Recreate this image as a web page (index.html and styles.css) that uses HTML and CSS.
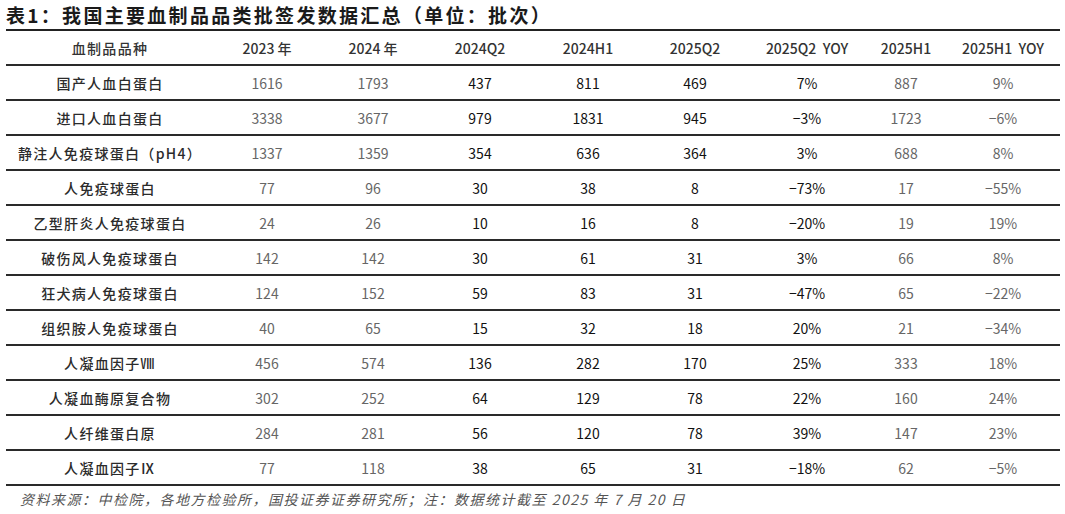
FILE: index.html
```html
<!DOCTYPE html>
<html lang="zh-CN">
<head>
<meta charset="utf-8">
<title>表1</title>
<link rel="stylesheet" href="styles.css">
</head>
<body>
<div class="page">
  <div class="title">表1：我国主要血制品品类批签发数据汇总（单位：批次）</div>
  <div class="table">
    <div class="row head">
      <div class="c name">血制品品种</div>
      <div class="c">2023 年</div>
      <div class="c">2024 年</div>
      <div class="c">2024Q2</div>
      <div class="c">2024H1</div>
      <div class="c">2025Q2</div>
      <div class="c">2025Q2&nbsp; YOY</div>
      <div class="c">2025H1</div>
      <div class="c">2025H1&nbsp; YOY</div>
    </div>
    <div class="row"><div class="c name">国产人血白蛋白</div><div class="c g">1616</div><div class="c g">1793</div><div class="c d">437</div><div class="c d">811</div><div class="c d">469</div><div class="c d">7%</div><div class="c g">887</div><div class="c g">9%</div></div>
    <div class="row"><div class="c name">进口人血白蛋白</div><div class="c g">3338</div><div class="c g">3677</div><div class="c d">979</div><div class="c d">1831</div><div class="c d">945</div><div class="c d">−3%</div><div class="c g">1723</div><div class="c g">−6%</div></div>
    <div class="row"><div class="c name">静注人免疫球蛋白（pH4）</div><div class="c g">1337</div><div class="c g">1359</div><div class="c d">354</div><div class="c d">636</div><div class="c d">364</div><div class="c d">3%</div><div class="c g">688</div><div class="c g">8%</div></div>
    <div class="row"><div class="c name">人免疫球蛋白</div><div class="c g">77</div><div class="c g">96</div><div class="c d">30</div><div class="c d">38</div><div class="c d">8</div><div class="c d">−73%</div><div class="c g">17</div><div class="c g">−55%</div></div>
    <div class="row"><div class="c name">乙型肝炎人免疫球蛋白</div><div class="c g">24</div><div class="c g">26</div><div class="c d">10</div><div class="c d">16</div><div class="c d">8</div><div class="c d">−20%</div><div class="c g">19</div><div class="c g">19%</div></div>
    <div class="row"><div class="c name">破伤风人免疫球蛋白</div><div class="c g">142</div><div class="c g">142</div><div class="c d">30</div><div class="c d">61</div><div class="c d">31</div><div class="c d">3%</div><div class="c g">66</div><div class="c g">8%</div></div>
    <div class="row"><div class="c name">狂犬病人免疫球蛋白</div><div class="c g">124</div><div class="c g">152</div><div class="c d">59</div><div class="c d">83</div><div class="c d">31</div><div class="c d">−47%</div><div class="c g">65</div><div class="c g">−22%</div></div>
    <div class="row"><div class="c name">组织胺人免疫球蛋白</div><div class="c g">40</div><div class="c g">65</div><div class="c d">15</div><div class="c d">32</div><div class="c d">18</div><div class="c d">20%</div><div class="c g">21</div><div class="c g">−34%</div></div>
    <div class="row"><div class="c name">人凝血因子Ⅷ</div><div class="c g">456</div><div class="c g">574</div><div class="c d">136</div><div class="c d">282</div><div class="c d">170</div><div class="c d">25%</div><div class="c g">333</div><div class="c g">18%</div></div>
    <div class="row"><div class="c name">人凝血酶原复合物</div><div class="c g">302</div><div class="c g">252</div><div class="c d">64</div><div class="c d">129</div><div class="c d">78</div><div class="c d">22%</div><div class="c g">160</div><div class="c g">24%</div></div>
    <div class="row"><div class="c name">人纤维蛋白原</div><div class="c g">284</div><div class="c g">281</div><div class="c d">56</div><div class="c d">120</div><div class="c d">78</div><div class="c d">39%</div><div class="c g">147</div><div class="c g">23%</div></div>
    <div class="row"><div class="c name">人凝血因子Ⅸ</div><div class="c g">77</div><div class="c g">118</div><div class="c d">38</div><div class="c d">65</div><div class="c d">31</div><div class="c d">−18%</div><div class="c g">62</div><div class="c g">−5%</div></div>
  </div>
  <div class="note">资料来源：中检院，各地方检验所，国投证券证券研究所；注：数据统计截至 2025 年 7 月 20 日</div>
</div>
</body>
</html>
```

FILE: styles.css
```css
html, body {
  margin: 0;
  padding: 0;
  background: #ffffff;
}
.page {
  width: 1065px;
  height: 514px;
  font-family: "Noto Sans CJK SC", "Noto Sans", sans-serif;
  color: #222;
}
.title {
  height: 29px;
  line-height: 29px;
  padding-left: 6px;
  font-size: 19px;
  font-weight: 700;
  letter-spacing: 2.3px;
  color: #1a1a1a;
  white-space: nowrap;
}
.table {
  margin: 0 5px 0 6px;
  border-top: 2px solid #222;
}
.row {
  display: grid;
  grid-template-columns: 208px 106px 106px 108px 108px 106px 118px 80px 114px;
  height: 35px;
  box-sizing: border-box;
  border-bottom: 2px solid #2a2a2a;
  align-items: center;
}
.c {
  text-align: center;
  font-size: 14px;
  line-height: 20px;
  white-space: nowrap;
}
.head .c {
  color: #333;
  font-weight: 500;
}
.name {
  color: #2b2b2b;
  font-weight: 500;
  letter-spacing: 1.3px;
}
.g {
  color: #666;
}
.d {
  color: #111;
}
.note {
  padding: 3px 0 0 20px;
  font-size: 14px;
  line-height: 20px;
  letter-spacing: 1.5px;
  font-style: italic;
  color: #555;
  white-space: nowrap;
}
```
